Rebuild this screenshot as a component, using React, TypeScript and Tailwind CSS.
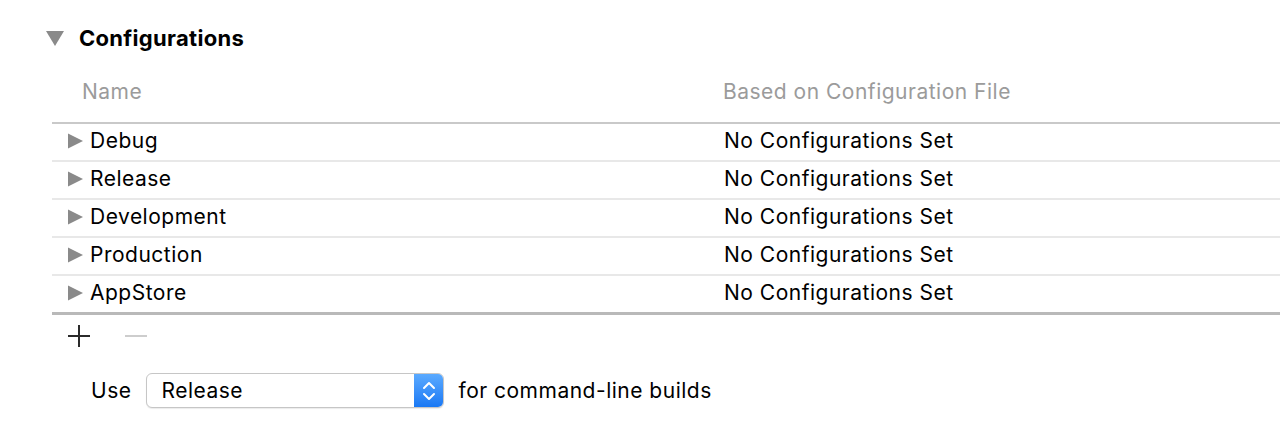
import React from "react";

const rows = ["Debug", "Release", "Development", "Production", "AppStore"];

function RowTriangle() {
  return (
    <svg width="15" height="16" viewBox="0 0 15 16" className="shrink-0">
      <polygon points="0,0.5 15,8 0,15.5" fill="#8a8a8a" />
    </svg>
  );
}

export default function App() {
  return (
    <div
      className="w-[1280px] h-[426px] bg-white overflow-hidden text-black"
      style={{ fontFamily: "Inter, 'Liberation Sans', sans-serif" }}
    >
      {/* Section header */}
      <div className="flex items-center h-[20px] mt-[28px] pl-[46px]">
        <svg width="18" height="16" viewBox="0 0 18 16" className="shrink-0">
          <polygon points="0,1 18,1 9,16" fill="#8a8a8a" />
        </svg>
        <span className="ml-[15px] text-[22px] font-bold tracking-[0.3px]">Configurations</span>
      </div>

      {/* Column headers */}
      <div className="flex items-center h-[24px] mt-[32px] text-[21px] tracking-[0.5px] text-[#9b9b9b]">
        <span className="ml-[82px] w-[641px]">Name</span>
        <span>Based on Configuration File</span>
      </div>

      {/* Table */}
      <div className="ml-[52px] mt-[18px]">
        <div className="h-[2px] bg-[#c9c9c9]" />
        {rows.map((r, i) => (
          <div key={r}>
            <div className="flex items-center h-[36px] text-[21px] tracking-[0.5px] pb-[2px]">
              <div className="flex items-center w-[672px] pl-[16px]">
                <RowTriangle />
                <span className="ml-[7px]">{r}</span>
              </div>
              <span>No Configurations Set</span>
            </div>
            {i < rows.length - 1 ? (
              <div className="h-[2px] bg-[#e8e8e8]" />
            ) : (
              <div className="h-[3px] bg-[#b9b9b9]" />
            )}
          </div>
        ))}
      </div>

      {/* Add / remove */}
      <div className="flex items-center h-[24px] mt-[9px] pl-[68px] gap-[35px]">
        <svg width="22" height="22" viewBox="0 0 22 22">
          <rect x="0" y="10" width="22" height="2" fill="#2b2b2b" />
          <rect x="10" y="0" width="2" height="22" fill="#2b2b2b" />
        </svg>
        <svg width="22" height="22" viewBox="0 0 22 22">
          <rect x="0" y="10" width="22" height="2" fill="#cdcdcd" />
        </svg>
      </div>

      {/* Use row */}
      <div className="flex items-center mt-[25px] h-[35px]">
        <span className="ml-[91px] text-[21px] tracking-[0.5px]">Use</span>
        <div className="ml-[15px] flex h-[35px] w-[298px] rounded-[6px] border border-[#c6c6c6] bg-white shadow-[0_1px_1px_rgba(0,0,0,0.08)] overflow-hidden">
          <span className="flex-1 flex items-center pl-[14px] text-[21px] tracking-[0.5px]">Release</span>
          <div className="w-[29px] flex items-center justify-center bg-gradient-to-b from-[#5aaaff] to-[#1878f4]">
            <svg width="14" height="22" viewBox="0 0 14 22">
              <polyline points="2,8 7,3 12,8" fill="none" stroke="white" strokeWidth="2" strokeLinecap="round" strokeLinejoin="round" />
              <polyline points="2,14 7,19 12,14" fill="none" stroke="white" strokeWidth="2" strokeLinecap="round" strokeLinejoin="round" />
            </svg>
          </div>
        </div>
        <span className="ml-[14px] text-[21px] tracking-[0.5px]">for command-line builds</span>
      </div>
    </div>
  );
}
